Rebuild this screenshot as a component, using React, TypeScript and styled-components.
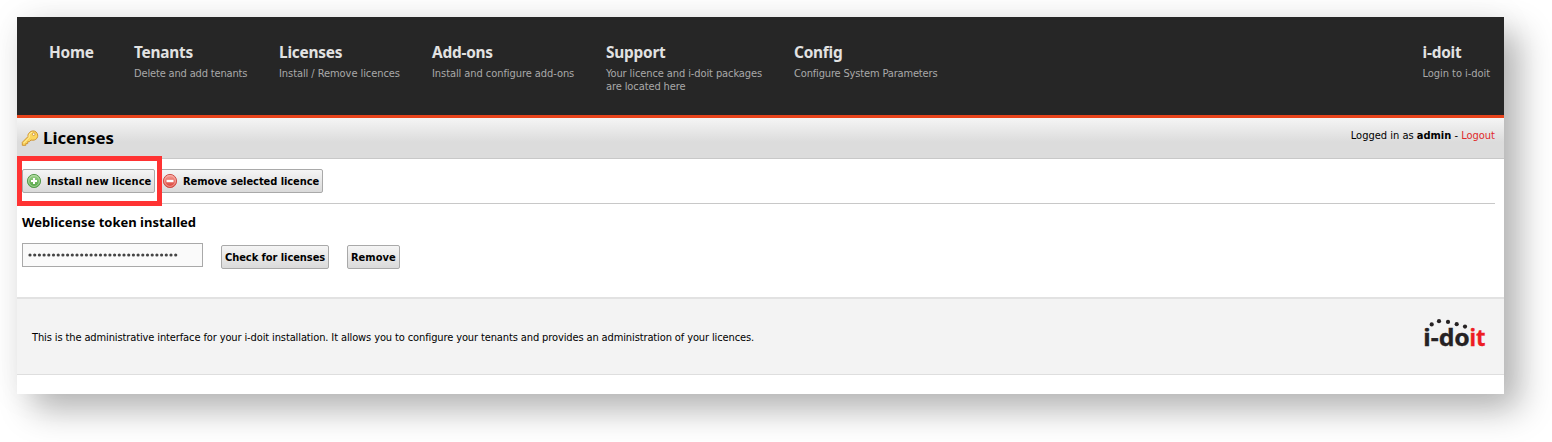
import React from "react";
import styled, { createGlobalStyle } from "styled-components";

const GlobalStyle = createGlobalStyle`
  * { box-sizing: border-box; }
  body {
    margin: 0;
    background: #fff;
    color: #000;
    font-family: "DejaVu Sans Condensed", "DejaVu Sans", sans-serif;
    font-stretch: condensed;
    font-size: 11px;
    line-height: 13px;
  }
`;

const titleFont = `"Noto Sans", "Open Sans", sans-serif`;

const Page = styled.div`
  width: 1552px;
  height: 442px;
  padding: 17px;
  overflow: hidden;
`;

const Window = styled.main`
  width: 1487px;
  height: 377px;
  background: #fff;
  box-shadow: 16px 16px 32px rgba(0, 0, 0, 0.28), 0 0 36px rgba(0, 0, 0, 0.06);
`;

const Header = styled.header`
  display: flex;
  height: 101px;
  padding: 25px 14px 0 32px;
  background: #262626;
  border-bottom: 3px solid #e8431b;
`;

const NavItem = styled.a<{ $width?: number; $last?: boolean }>`
  display: block;
  width: ${(p) => (p.$width ? `${p.$width}px` : "auto")};
  margin-left: ${(p) => (p.$last ? "auto" : "0")};
  white-space: nowrap;
`;

const NavTitle = styled.strong`
  display: block;
  height: 25px;
  color: #e2e2e2;
  font: 700 15.4px/21px ${titleFont};
  letter-spacing: -0.22px;
`;

const NavText = styled.span<{ $tracking: number }>`
  display: block;
  color: #a9a9a9;
  letter-spacing: ${(p) => p.$tracking}px;
`;

const TitleBar = styled.div`
  display: flex;
  height: 41px;
  padding: 0 9px 0 4px;
  background: linear-gradient(#f5f5f5, #dcdcdc 60%);
  border-bottom: 1px solid #c8c8c8;
`;

const PageTitle = styled.h1`
  display: flex;
  align-items: center;
  gap: 4px;
  margin: 0;
  font: 700 16.8px/20px ${titleFont};
`;

const Account = styled.div`
  margin-left: auto;
  padding-top: 11px;
`;

const Logout = styled.a`
  color: #e02a2a;
`;

const Content = styled.section`
  height: 138px;
  padding: 10px 9px 0 5px;
`;

const Toolbar = styled.div`
  display: flex;
  gap: 3px;
  height: 35px;
  border-bottom: 1px solid #c8c8c8;
`;

const Highlight = styled.div`
  position: absolute;
  left: 17px;
  top: 156px;
  width: 145px;
  height: 50px;
  border: 5px solid #ff3333;
`;

const Button = styled.button<{ $width: number; $tracking?: number }>`
  display: flex;
  align-items: center;
  gap: 5px;
  width: ${(p) => p.$width}px;
  height: 24px;
  padding: 1px 0 0 3px;
  border: 1px solid #a9a9a9;
  border-radius: 2px;
  background: linear-gradient(#f5f5f5, #dadada);
  color: #000;
  font: inherit;
  font-weight: 700;
  letter-spacing: ${(p) => p.$tracking ?? 0}px;
  white-space: nowrap;

  svg {
    margin-bottom: 2px;
  }
`;

const SectionTitle = styled.h2`
  margin: 8px 0 1px;
  font: 700 13px/20px ${titleFont};
`;

const TokenForm = styled.form`
  display: flex;
  gap: 18px;
  align-items: flex-end;
  height: 36px;
`;

const TokenField = styled.div`
  display: flex;
  align-items: center;
  width: 181px;
  height: 24px;
  margin-bottom: 2px;
  padding-left: 5px;
  border: 1px solid #a9a9a9;
  background: #fafafa;
`;

const Footer = styled.footer`
  display: flex;
  align-items: center;
  justify-content: space-between;
  height: 78px;
  padding: 0 18px 0 15px;
  background: #f3f3f3;
  border-top: 2px solid #e2e2e2;
  border-bottom: 1px solid #dedede;
`;

const FooterText = styled.p`
  margin: 2px 0 0;
  letter-spacing: -0.117px;
`;

const KeyIcon = () => (
  <svg width="18" height="18" viewBox="0 0 18 18">
    <path
      d="M7 7.600 1.300 13.300v3h3.500v-1.700h1.900v-1.900h1.700l1.600-1.700c2.500.6 4.600 0 5.900-1.700 1.400-1.900 1-4.700-.8-6.300-1.900-1.600-4.700-1.400-6.500.4C7.200 4.800 6.700 6 7 7.600z"
      fill="#fbd55c"
      stroke="#cf9433"
    />
    <path d="M2.500 14.200 8.200 8.400C7.700 6 9 3.700 11.300 3.200" fill="none" stroke="#fff0a8" />
    <circle cx="12.700" cy="5.200" r="1.300" fill="#fff" stroke="#c98f31" strokeWidth=".8" />
  </svg>
);

const RoundIcon = ({ kind }: { kind: "add" | "remove" }) => {
  const add = kind === "add";
  return (
    <svg width="16" height="16" viewBox="0 0 16 16">
      <defs>
        <linearGradient id={kind} x1="0" y1="0" x2="0" y2="1">
          <stop offset="0" stopColor={add ? "#a3d490" : "#f7a59b"} />
          <stop offset="1" stopColor={add ? "#4ba03e" : "#d83a32"} />
        </linearGradient>
      </defs>
      <circle cx="8" cy="8" r="6.600" fill={`url(#${kind})`} stroke={add ? "#5a9d50" : "#cf514b"} />
      <circle cx="8" cy="8" r="5.400" fill="none" stroke={add ? "#c3e5b8" : "#f9bcb5"} strokeWidth=".7" />
      <path d={add ? "M8 5v6M5 8h6" : "M4.500 8h7"} stroke="#fff" strokeWidth={add ? 2 : 2.400} />
    </svg>
  );
};

const TokenDots = () => (
  <svg width="150" height="4" viewBox="0 0 150 4">
    {Array.from({ length: 32 }, (_, i) => (
      <circle key={i} cx={2 + i * 4.7} cy="2" r="1.600" fill="#444" />
    ))}
  </svg>
);

const logoDots = [[9.7, 10.4], [17, 7.2], [26, 7.9], [34.7, 10.2], [43, 12.6]];

const Logo = () => (
  <svg width="64" height="45" viewBox="0 0 64 45">
    {logoDots.map(([x, y]) => (
      <circle key={x} cx={x} cy={y} r="2.100" fill="#262223" />
    ))}
    <text y="31.700" fontFamily={titleFont} fontWeight="700" fontSize="23.500" strokeWidth=".3">
      <tspan x="1.300" fill="#262223" stroke="#262223" textLength="46.500" lengthAdjust="spacingAndGlyphs">i-do</tspan>
      <tspan x="47.400" fill="#ed1c24" stroke="#ed1c24" textLength="16" lengthAdjust="spacingAndGlyphs">it</tspan>
    </text>
  </svg>
);

const navItems = [
  { title: "Home", lines: [], width: 85, tracking: 0 },
  { title: "Tenants", lines: ["Delete and add tenants"], width: 145, tracking: -0.16 },
  { title: "Licenses", lines: ["Install / Remove licences"], width: 153, tracking: -0.07 },
  { title: "Add-ons", lines: ["Install and configure add-ons"], width: 174, tracking: -0.07 },
  { title: "Support", lines: ["Your licence and i-doit packages", "are located here"], width: 188, tracking: -0.1 },
  { title: "Config", lines: ["Configure System Parameters"], width: 200, tracking: -0.16 },
  { title: "i-doit", lines: ["Login to i-doit"], tracking: -0.05 },
];

export default function App() {
  return (
    <Page>
      <GlobalStyle />
      <Window>
        <Header>
          {navItems.map((item, i) => (
            <NavItem key={item.title} $width={item.width} $last={i === navItems.length - 1}>
              <NavTitle>{item.title}</NavTitle>
              {item.lines.map((line) => (
                <NavText key={line} $tracking={item.tracking}>{line}</NavText>
              ))}
            </NavItem>
          ))}
        </Header>
        <TitleBar>
          <PageTitle><KeyIcon />Licenses</PageTitle>
          <Account>Logged in as <b>admin</b> - <Logout>Logout</Logout></Account>
        </TitleBar>
        <Content>
          <Toolbar>
            <Button type="button" $width={133} $tracking={0.04}><RoundIcon kind="add" />Install new licence</Button>
            <Button type="button" $width={165} $tracking={-0.06}><RoundIcon kind="remove" />Remove selected licence</Button>
          </Toolbar>
          <SectionTitle>Weblicense token installed</SectionTitle>
          <TokenForm>
            <TokenField><TokenDots /></TokenField>
            <Button type="button" $width={108} $tracking={-0.06}>Check for licenses</Button>
            <Button type="button" $width={53}>Remove</Button>
          </TokenForm>
        </Content>
        <Footer>
          <FooterText>
            This is the administrative interface for your i-doit installation. It allows you to configure your tenants and provides an administration of your licences.
          </FooterText>
          <Logo />
        </Footer>
      </Window>
      <Highlight />
    </Page>
  );
}
